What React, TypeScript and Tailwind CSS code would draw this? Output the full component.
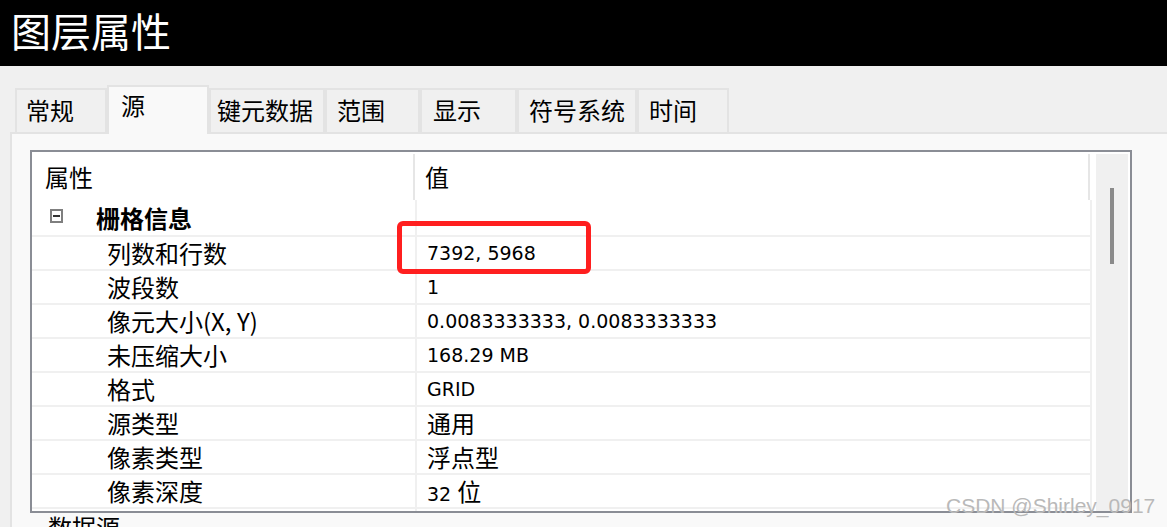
import React from "react";

const CJK = { fontFamily: '"Noto Sans CJK SC", "Noto Sans", sans-serif' };
const VAL = { fontFamily: '"DejaVu Sans", "Noto Sans CJK SC", sans-serif' };

type Tab = { label: string; w: string; pl: string; active?: boolean };

const tabs: Tab[] = [
  { label: "常规", w: "w-[92px]", pl: "pl-[9px]" },
  { label: "源", w: "w-[102px]", pl: "pl-[12px]", active: true },
  { label: "键元数据", w: "w-[116px]", pl: "pl-[6px]" },
  { label: "范围", w: "w-[95px]", pl: "pl-[10px]" },
  { label: "显示", w: "w-[97px]", pl: "pl-[11px]" },
  { label: "符号系统", w: "w-[120px]", pl: "pl-[10px]" },
  { label: "时间", w: "w-[92px]", pl: "pl-[10px]" },
];

type Row = { k: string; v: string; cjk?: boolean; mixed?: [string, string] };

const rows: Row[] = [
  { k: "列数和行数", v: "7392, 5968" },
  { k: "波段数", v: "1" },
  { k: "像元大小(X, Y)", v: "0.0083333333, 0.0083333333" },
  { k: "未压缩大小", v: "168.29 MB" },
  { k: "格式", v: "GRID" },
  { k: "源类型", v: "通用", cjk: true },
  { k: "像素类型", v: "浮点型", cjk: true },
  { k: "像素深度", v: "", mixed: ["32 ", "位"] },
  { k: "", v: "" },
];

export default function App() {
  return (
    <div className="relative w-[1167px] h-[527px] overflow-hidden bg-[#f0f0f0] flex flex-col text-black" style={CJK}>
      {/* title bar */}
      <div className="h-[66px] shrink-0 bg-black text-white text-[40px] leading-[40px] pl-[11px] pt-[10px]" style={CJK}>
        图层属性
      </div>

      {/* tabs */}
      <div className="h-[66px] shrink-0 flex items-end pl-[15px]">
        {tabs.map((t) =>
          t.active ? (
            <div
              key={t.label}
              className={`${t.w} ${t.pl} relative z-10 h-[49px] -mb-[2px] bg-[#f9f9f9] border-t-2 border-l-2 border-r-2 border-[#e3e3e3] text-[24px] leading-[24px] pt-[6px]`}
            >
              {t.label}
            </div>
          ) : (
            <div
              key={t.label}
              className={`${t.w} ${t.pl} h-[44px] bg-[#f0f0f0] border-t-2 border-l-2 border-r-2 border-[#e3e3e3] text-[24px] leading-[40px]`}
            >
              {t.label}
            </div>
          )
        )}
      </div>

      {/* panel */}
      <div className="flex-1 ml-[10px] border-l-2 border-t-2 border-[#e3e3e3] bg-[#f9f9f9] pl-[18px] pt-[16px]">
        <div className="w-[1102px] h-[363px] border-2 border-[#8a8d95] bg-white flex pt-[2px] overflow-hidden">
          {/* grid */}
          <div className="w-[1060px] flex flex-col">
            {/* header */}
            <div className="flex h-[46px] shrink-0 text-[24px] leading-[46px]">
              <div className="w-[381px] pl-[13px]">属性</div>
              <div className="w-[2px] bg-[#e6e6e6]" />
              <div className="w-[673px] pl-[10px]">值</div>
              <div className="w-[2px] bg-[#e6e6e6]" />
            </div>
            {/* group row */}
            <div className="flex h-[35px] shrink-0">
              <div className="w-[383px] flex items-start">
                <div className="ml-[18px] mt-[9px] w-[13px] h-[14px] border-2 border-[#7f7f7f] flex items-center justify-center">
                  <div className="w-[7px] h-[2px] bg-[#333]" />
                </div>
                <div className="ml-[33px] pt-[2px] text-[24px] leading-[31px] font-bold">栅格信息</div>
              </div>
              <div className="w-[2px] bg-[#f0f0f0]" />
              <div className="w-[673px]" />
              <div className="w-[2px] bg-[#f0f0f0]" />
            </div>
            {rows.map((r, i) => (
              <div key={i} className="flex h-[34px] shrink-0 border-t-2 border-[#f0f0f0]">
                <div className="w-[383px] pl-[75px] pt-[3px] text-[24px] leading-[26px] whitespace-nowrap">{r.k}</div>
                <div className="w-[2px] bg-[#f0f0f0]" />
                <div className="w-[673px] pl-[10px] whitespace-nowrap">
                  {r.cjk ? (
                    <div className="pt-[3px] text-[24px] leading-[26px]" style={CJK}>{r.v}</div>
                  ) : r.mixed ? (
                    <div className="text-[19px] leading-[32px]" style={VAL}>
                      {r.mixed[0]}
                      <span className="text-[24px]" style={CJK}>{r.mixed[1]}</span>
                    </div>
                  ) : (
                    <div className="text-[19px] leading-[32px]" style={VAL}>{r.v}</div>
                  )}
                </div>
                <div className="w-[2px] bg-[#f0f0f0]" />
              </div>
            ))}
          </div>
          <div className="w-[4px]" />
          {/* scrollbar */}
          <div className="w-[32px] bg-[#f0f0f0] flex flex-col items-start">
            <div className="mt-[34px] ml-[14px] w-[4px] h-[76px] bg-[#8a8a8a]" />
          </div>
        </div>
        <div className="ml-[18px] mt-[2px] text-[24px] leading-[24px]">数据源</div>
      </div>

      {/* red highlight */}
      <div className="absolute left-[397px] top-[221px] w-[194px] h-[53px] border-[5px] border-[#ff1f1f] rounded-[6px]" />

      {/* watermark */}
      <div
        className="absolute left-[946px] top-[494px] text-[21px] leading-[24px] text-[#b9b9b9] whitespace-nowrap"
        style={{ fontFamily: '"Liberation Sans", Arial, sans-serif' }}
      >
        CSDN @Shirley_0917
      </div>
    </div>
  );
}
